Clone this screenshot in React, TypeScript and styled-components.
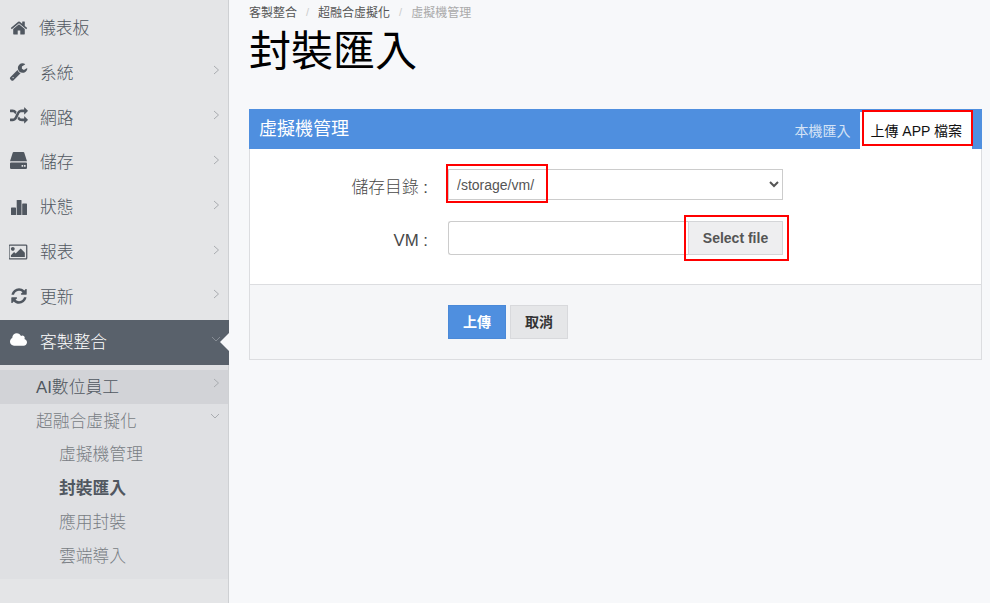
import * as React from "react";
import styled, { createGlobalStyle } from "styled-components";

const GlobalStyle = createGlobalStyle`
  html, body {
    margin: 0;
    height: 100%;
    overflow: hidden;
    background: #f7f8fa;
    font-family: "Liberation Sans", "Noto Sans CJK TC", sans-serif;
  }
  #root {
    height: 100%;
  }
`;

const AppLayout = styled.div`
  display: grid;
  grid-template-columns: 229px 1fr;
  height: 603px;
`;

const Sidebar = styled.nav`
  background: #e4e5e7;
  border-right: 1px solid #ced0d3;
  padding-top: 6px;
  font-weight: 300;
`;

const MenuItem = styled.div<{ $active?: boolean }>`
  position: relative;
  display: flex;
  align-items: center;
  height: 44.85px;
  margin-right: ${(p) => (p.$active ? -1 : 0)}px;
  font-size: 16.8px;
  color: ${(p) => (p.$active ? "#fff" : "#505760")};
  background: ${(p) => (p.$active ? "#59616b" : "transparent")};
`;

const IconSlot = styled.span<{ $lift?: number; $tight?: boolean }>`
  display: flex;
  justify-content: center;
  align-items: center;
  width: 19px;
  margin-left: 9px;
  margin-right: ${(p) => (p.$tight ? 11 : 12)}px;
  margin-top: ${(p) => -2 - (p.$lift ?? 0) * 2}px;
`;

const Glyph = styled.svg`
  display: block;
  fill: currentColor;
`;

const MenuLabel = styled.span`
  flex: 1;
  padding-bottom: 3px;
`;

const SubLabel = styled.span`
  flex: 1;
`;

const Arrow = styled.svg`
  flex: none;
  width: 7px;
  height: 10px;
  margin-right: 8px;
  margin-top: -6px;
  fill: none;
  stroke: #a9acb0;
  stroke-width: 1;
`;

const DownArrow = styled.svg<{ $dim?: boolean }>`
  flex: none;
  width: 10px;
  height: 7px;
  margin-right: 8px;
  margin-top: -6px;
  fill: none;
  stroke: ${(p) => (p.$dim ? "#868c94" : "#a9acb0")};
  stroke-width: 1;
`;

const ActiveCaret = styled.span`
  position: absolute;
  right: 0;
  top: 13px;
  border-style: solid;
  border-width: 9px 9px 9px 0;
  border-color: transparent #f7f8fa transparent transparent;
`;

const SubMenu = styled.div`
  background: #dfe0e3;
  padding: 5px 0;
`;

const SubItem = styled.div<{ $level: number; $current?: boolean; $open?: boolean }>`
  display: flex;
  align-items: center;
  box-sizing: border-box;
  height: 34px;
  padding-bottom: ${(p) => (p.$level === 1 ? 2 : 4)}px;
  padding-left: ${(p) => (p.$level === 1 ? 36 : 59)}px;
  font-size: 16.8px;
  font-weight: ${(p) => (p.$current ? 700 : 300)};
  color: ${(p) => (p.$current || p.$open ? "#505760" : "#787d84")};
  background: ${(p) => (p.$open ? "#d2d3d7" : "transparent")};
`;

const Main = styled.main`
  padding: 0 8px 0 20px;
`;

const Breadcrumb = styled.div`
  display: flex;
  align-items: center;
  height: 23px;
  margin-bottom: 1px;
  font-size: 12px;
  color: #555;
`;

const Separator = styled.span`
  margin: 0 9px;
  font-size: 11px;
  color: #ccc;
`;

const CrumbCurrent = styled.span`
  color: #aaa;
`;

const PageTitle = styled.h1`
  margin: 0 0 28px;
  height: 57px;
  line-height: 56px;
  font-size: 42px;
  font-weight: 400;
  color: #000;
`;

const Portlet = styled.section`
  border: 1px solid #dcdde0;
  border-top: 0;
  background: #fff;
`;

const PortletHeader = styled.header`
  display: flex;
  justify-content: space-between;
  align-items: flex-end;
  height: 40px;
  margin: 0 -1px;
  padding: 0 10px;
  background: #4f8fdf;
`;

const PortletTitle = styled.div`
  align-self: center;
  padding-bottom: 5px;
  font-size: 18px;
  color: #fff;
`;

const Tabs = styled.div`
  display: flex;
  align-items: flex-end;
`;

const Tab = styled.div<{ $active?: boolean }>`
  position: relative;
  display: flex;
  align-items: center;
  justify-content: center;
  box-sizing: border-box;
  height: 37px;
  padding: 0 10px 2px;
  font-size: 14px;
  color: ${(p) => (p.$active ? "#111" : "#d5e3f6")};
  background: ${(p) => (p.$active ? "#fff" : "transparent")};
`;

const Mark = styled.span`
  position: absolute;
  border: 2px solid #f00;
  pointer-events: none;
`;

const TabMark = styled(Mark)`
  left: 2px;
  right: -1px;
  top: -2px;
  bottom: 3px;
`;

const SelectMark = styled(Mark)`
  left: -2px;
  top: -5px;
  width: 98px;
  height: 35px;
`;

const FileMark = styled(Mark)`
  left: -5px;
  right: -7px;
  top: -7px;
  bottom: -7px;
`;

const FormBody = styled.div`
  display: flex;
  flex-direction: column;
  gap: 21px;
  padding: 20px 0 29px;
`;

const FormRow = styled.div`
  display: grid;
  grid-template-columns: 178px 335px;
  column-gap: 20px;
  align-items: center;
`;

const FieldLabel = styled.label<{ $drop: number }>`
  padding-top: ${(p) => p.$drop}px;
  font-size: 16.8px;
  font-weight: 300;
  color: #484848;
  text-align: right;
`;

const Field = styled.div`
  position: relative;
`;

const DirSelect = styled.select`
  display: block;
  width: 335px;
  height: 31px;
  padding: 0 4px;
  border: 1px solid #ccc;
  background: #fff;
  border-radius: 0;
  font-family: inherit;
  font-size: 14px;
  color: #555;
`;

const FileField = styled.div`
  display: flex;
  height: 34px;
`;

const FileName = styled.div`
  flex: 1;
  border: 1px solid #ccc;
  border-right: 0;
  border-radius: 3px 0 0 3px;
  background: #fff;
`;

const FileButton = styled.div`
  position: relative;
  display: flex;
  align-items: center;
  justify-content: center;
  box-sizing: border-box;
  width: 95px;
  border: 1px solid #d4d5d8;
  background: #eeeef0;
  font-size: 14px;
  font-weight: 700;
  color: #555;
`;

const FormActions = styled.div`
  display: flex;
  gap: 4px;
  padding: 20px 0 20px 198px;
  background: #f5f6f8;
  border-top: 1px solid #dcdde0;
`;

const ActionButton = styled.button<{ $primary?: boolean }>`
  width: 58px;
  height: 34px;
  padding: 0 0 2px;
  border: 1px solid ${(p) => (p.$primary ? "#4a89d8" : "#d8d9dc")};
  background: ${(p) => (p.$primary ? "#4f8fdf" : "#e5e6e8")};
  color: ${(p) => (p.$primary ? "#fff" : "#333")};
  font-family: inherit;
  font-size: 14px;
  font-weight: 700;
`;

const ChevronRight = () => (
  <Arrow viewBox="0 0 7 10">
    <path d="M1 1l4.5 4L1 9" />
  </Arrow>
);

const ChevronDown = ({ dim }: { dim?: boolean }) => (
  <DownArrow viewBox="0 0 10 7" $dim={dim}>
    <path d="M1 1l4 4 4-4" />
  </DownArrow>
);

const HomeIcon = () => (
  <Glyph width="18" height="18" viewBox="0 0 1792 1792">
    <path d="M1472 992v480q0 26-19 45t-45 19h-384v-384h-256v384h-384q-26 0-45-19t-19-45v-480q0-1 .5-3t.5-3l575-474 575 474q1 2 1 6zm223-69l-62 74q-8 9-21 11h-3q-13 0-21-7l-692-577-692 577q-12 8-24 7-13-2-21-11l-62-74q-8-10-7-23.5t11-21.5l719-599q32-26 76-26t76 26l244 204v-195q0-14 9-23t23-9h192q14 0 23 9t9 23v408l219 182q10 8 11 21.5t-7 23.5z" />
  </Glyph>
);

const WrenchIcon = () => (
  <Glyph width="19" height="19" viewBox="0 0 1792 1792">
    <path d="M448 1472q0-26-19-45t-45-19-45 19-19 45 19 45 45 19 45-19 19-45zm644-420l-682 682q-37 37-90 37-52 0-91-37l-106-108q-38-36-38-90 0-53 38-91l681-681q39 98 114.5 173.5t173.5 114.5zm634-435q0 39-23 106-47 134-164.5 217.5t-258.5 83.5q-185 0-316.5-131.5t-131.5-316.5 131.5-316.5 316.5-131.5q58 0 121.5 16.5t107.5 46.5q16 11 16 28t-16 28l-293 169v224l193 107q5-3 79-48.5t135.5-81 70.5-35.5q15 0 23.5 10t8.5 25z" />
  </Glyph>
);

const RandomIcon = () => (
  <Glyph width="18" height="18" viewBox="0 0 1792 1792">
    <path d="M666 481q-60 92-137 273-22-45-37-72.5t-40.5-63.5-51-56.5-63-35-81.5-14.5h-224q-14 0-23-9t-9-23v-192q0-14 9-23t23-9h224q250 0 410 225zm1126 799q0 14-9 23l-320 320q-9 9-23 9-13 0-22.5-9.5t-9.5-22.5v-192q-32 0-85 .5t-81 1-73-1-71-5-64-10.5-63-18.5-58-28.5-59-40-55-53.5-56-69.5q59-93 136-273 22 45 37 72.5t40.5 63.5 51 56.5 63 35 81.5 14.5h256v-192q0-14 9-23t23-9q12 0 24 10l319 319q9 9 9 23zm0-896q0 14-9 23l-320 320q-9 9-23 9-13 0-22.5-9.5t-9.5-22.5v-192h-256q-48 0-87 15t-69 45-51 61.5-45 77.5q-32 62-78 171-29 66-49.5 111t-54 105-64 100-74 83-90 68.5-106.5 42-128 16.5h-224q-14 0-23-9t-9-23v-192q0-14 9-23t23-9h224q48 0 87-15t69-45 51-61.5 45-77.5q32-62 78-171 29-66 49.5-111t54-105 64-100 74-83 90-68.5 106.5-42 128-16.5h256v-192q0-14 9-23t23-9q12 0 24 10l319 319q9 9 9 23z" />
  </Glyph>
);

const DriveIcon = () => (
  <Glyph width="17" height="17" viewBox="0 0 17 17">
    <path d="M3.6 0h9.8q.6 0 .8.6L17 9.2H0L2.8.6Q3 0 3.6 0zM1 10.4h15q1 0 1 1v4.4q0 1.2-1.2 1.2H1.2Q0 17 0 15.8v-4.4q0-1 1-1zm10.6 2.7v1.7h1.6v-1.7zm2.4 0v1.7h1.6v-1.7z" fillRule="evenodd" />
  </Glyph>
);

const BarsIcon = () => (
  <Glyph width="17" height="16" viewBox="0 0 17 16">
    <rect x="1" y="8.5" width="5" height="7.5" rx="0.6" />
    <rect x="6.7" y="1" width="4.8" height="15" rx="0.6" />
    <rect x="12.2" y="4.5" width="4.8" height="11.5" rx="0.6" />
  </Glyph>
);

const PictureIcon = () => (
  <Glyph width="19" height="18" viewBox="0 0 1920 1792">
    <path d="M576 576q0 80-56 136t-136 56-136-56-56-136 56-136 136-56 136 56 56 136zm1024 384v448h-1408v-192l320-320 160 160 512-512zm96-704h-1600q-13 0-22.5 9.5t-9.5 22.5v1216q0 13 9.5 22.5t22.5 9.5h1600q13 0 22.5-9.5t9.5-22.5v-1216q0-13-9.5-22.5t-22.5-9.5zm160 32v1216q0 66-47 113t-113 47h-1600q-66 0-113-47t-47-113v-1216q0-66 47-113t113-47h1600q66 0 113 47t47 113z" />
  </Glyph>
);

const RefreshIcon = () => (
  <Glyph width="18" height="18" viewBox="0 0 1792 1792">
    <path d="M1639 1056q0 5-1 7-64 268-268 434.5t-478 166.5q-146 0-282.5-55t-243.5-157l-129 129q-19 19-45 19t-45-19-19-45v-448q0-26 19-45t45-19h448q26 0 45 19t19 45-19 45l-137 137q71 66 161 102t187 36q134 0 250-65t186-179q11-17 53-117 8-23 30-23h192q13 0 22.5 9.5t9.5 22.5zm25-800v448q0 26-19 45t-45 19h-448q-26 0-45-19t-19-45 19-45l138-138q-148-137-349-137-134 0-250 65t-186 179q-11 17-53 117-8 23-30 23h-199q-13 0-22.5-9.5t-9.5-22.5v-7q65-268 270-434.5t480-166.5q146 0 284 55.5t245 156.5l130-129q19-19 45-19t45 19 19 45z" />
  </Glyph>
);

const CloudIcon = () => (
  <Glyph width="17" height="16" viewBox="0 0 1920 1792">
    <path d="M1920 1152q0 159-112.5 271.5t-271.5 112.5h-1088q-185 0-316.5-131.5t-131.5-316.5q0-132 71-241.5t187-163.5q-2-28-2-43 0-212 150-362t362-150q158 0 286.5 88t187.5 230q70-62 166-62 106 0 181 75t75 181q0 75-41 138 129 30 213 134.5t84 239.5z" />
  </Glyph>
);

const menu: { label: string; icon: React.ReactNode; arrow: boolean; lift?: number; tight?: boolean }[] = [
  { label: "儀表板", icon: <HomeIcon />, arrow: false, lift: -0.5, tight: true },
  { label: "系統", icon: <WrenchIcon />, arrow: true, lift: 1 },
  { label: "網路", icon: <RandomIcon />, arrow: true, lift: 1 },
  { label: "儲存", icon: <DriveIcon />, arrow: true, lift: 1 },
  { label: "狀態", icon: <BarsIcon />, arrow: true },
  { label: "報表", icon: <PictureIcon />, arrow: true },
  { label: "更新", icon: <RefreshIcon />, arrow: true },
];

export default function App() {
  return (
    <AppLayout>
      <GlobalStyle />
      <Sidebar>
        {menu.map((m) => (
          <MenuItem key={m.label}>
            <IconSlot $lift={m.lift} $tight={m.tight}>
              {m.icon}
            </IconSlot>
            <MenuLabel>{m.label}</MenuLabel>
            {m.arrow && <ChevronRight />}
          </MenuItem>
        ))}
        <MenuItem $active>
          <IconSlot $lift={1.5}>
            <CloudIcon />
          </IconSlot>
          <MenuLabel>客製整合</MenuLabel>
          <ChevronDown dim />
          <ActiveCaret />
        </MenuItem>
        <SubMenu>
          <SubItem $level={1} $open>
            <SubLabel>AI數位員工</SubLabel>
            <ChevronRight />
          </SubItem>
          <SubItem $level={1}>
            <SubLabel>超融合虛擬化</SubLabel>
            <ChevronDown />
          </SubItem>
          <SubItem $level={2}>虛擬機管理</SubItem>
          <SubItem $level={2} $current>
            封裝匯入
          </SubItem>
          <SubItem $level={2}>應用封裝</SubItem>
          <SubItem $level={2}>雲端導入</SubItem>
        </SubMenu>
      </Sidebar>
      <Main>
        <Breadcrumb>
          <span>客製整合</span>
          <Separator>/</Separator>
          <span>超融合虛擬化</span>
          <Separator>/</Separator>
          <CrumbCurrent>虛擬機管理</CrumbCurrent>
        </Breadcrumb>
        <PageTitle>封裝匯入</PageTitle>
        <Portlet>
          <PortletHeader>
            <PortletTitle>虛擬機管理</PortletTitle>
            <Tabs>
              <Tab>本機匯入</Tab>
              <Tab $active>
                上傳 APP 檔案
                <TabMark />
              </Tab>
            </Tabs>
          </PortletHeader>
          <FormBody>
            <FormRow>
              <FieldLabel $drop={3}>儲存目錄 :</FieldLabel>
              <Field>
                <DirSelect defaultValue="/storage/vm/">
                  <option>/storage/vm/</option>
                </DirSelect>
                <SelectMark />
              </Field>
            </FormRow>
            <FormRow>
              <FieldLabel $drop={5}>VM :</FieldLabel>
              <FileField>
                <FileName />
                <FileButton>
                  Select file
                  <FileMark />
                </FileButton>
              </FileField>
            </FormRow>
          </FormBody>
          <FormActions>
            <ActionButton $primary>上傳</ActionButton>
            <ActionButton>取消</ActionButton>
          </FormActions>
        </Portlet>
      </Main>
    </AppLayout>
  );
}
